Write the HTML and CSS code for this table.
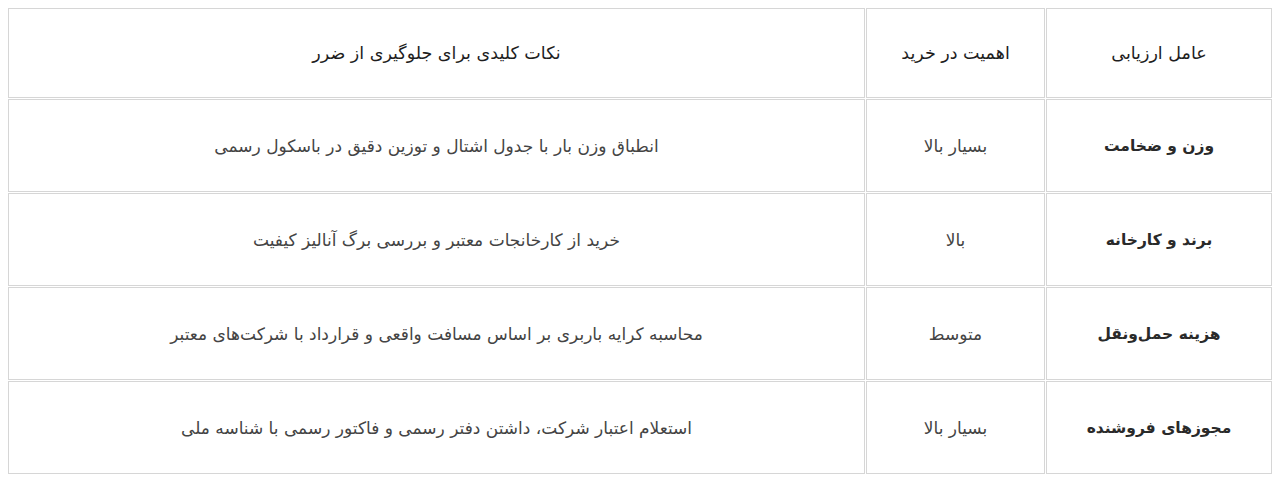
FILE: index.html
```
<!DOCTYPE html>
<html lang="fa" dir="rtl">
<head>
<meta charset="utf-8">
<link rel="stylesheet" href="styles.css">
</head>
<body>
<table class="grid">
  <colgroup>
    <col class="c-factor">
    <col class="c-importance">
    <col class="c-tips">
  </colgroup>
  <thead>
    <tr class="head-row">
      <th>عامل ارزیابی</th>
      <th>اهمیت در خرید</th>
      <th>نکات کلیدی برای جلوگیری از ضرر</th>
    </tr>
  </thead>
  <tbody>
    <tr>
      <td class="factor">وزن و ضخامت</td>
      <td>بسیار بالا</td>
      <td>انطباق وزن بار با جدول اشتال و توزین دقیق در باسکول رسمی</td>
    </tr>
    <tr>
      <td class="factor">برند و کارخانه</td>
      <td>بالا</td>
      <td>خرید از کارخانجات معتبر و بررسی برگ آنالیز کیفیت</td>
    </tr>
    <tr>
      <td class="factor">هزینه حمل‌ونقل</td>
      <td>متوسط</td>
      <td>محاسبه کرایه باربری بر اساس مسافت واقعی و قرارداد با شرکت‌های معتبر</td>
    </tr>
    <tr>
      <td class="factor">مجوزهای فروشنده</td>
      <td>بسیار بالا</td>
      <td>استعلام اعتبار شرکت، داشتن دفتر رسمی و فاکتور رسمی با شناسه ملی</td>
    </tr>
  </tbody>
</table>
</body>
</html>
```
FILE: styles.css
```
html, body {
  margin: 0;
  padding: 0;
  background: #ffffff;
}
body {
  font-family: "DejaVu Sans", "Noto Sans", sans-serif;
  font-size: 17px;
  color: #444444;
}
.grid {
  margin: 7px;
  border-collapse: separate;
  border-spacing: 1px;
  table-layout: fixed;
  width: 1266px;
}
.c-factor { width: 226px; }
.c-importance { width: 179px; }
.c-tips { width: 857px; }
.grid th,
.grid td {
  border: 1px solid #d6d6d6;
  padding: 0 8px;
  text-align: center;
  vertical-align: middle;
  box-sizing: border-box;
  height: 93px;
}
.head-row th {
  height: 90px;
  font-weight: normal;
  font-size: 17.5px;
  color: #1e1e1e;
}
.grid td.factor {
  font-weight: bold;
  font-size: 15.5px;
  color: #2a2a2a;
}
```
